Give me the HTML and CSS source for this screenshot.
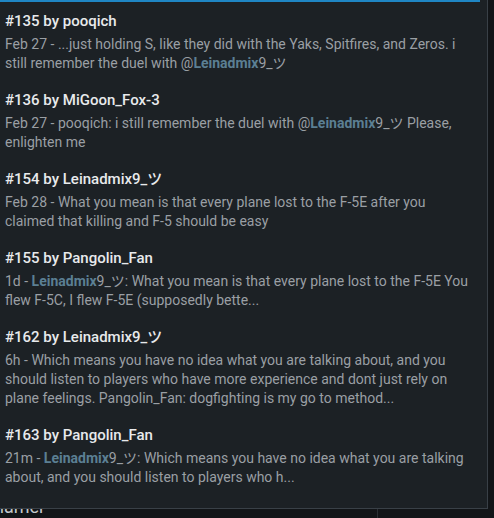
FILE: index.html
```html
<!DOCTYPE html>
<html>
<head>
<meta charset="utf-8">
<link rel="stylesheet" href="styles.css">
</head>
<body>
<div class="page">
  <div class="behind">
    <div class="behind-text">ñamer</div>
    <div class="behind-rule"></div>
  </div>
  <div class="panel">
    <div class="item">
      <div class="title">#135 by pooqich</div>
      <div class="body">Feb 27 - ...just holding S, like they did with the Yaks, Spitfires, and Zeros. i still remember the duel with @<b class="mention">Leinadmix</b>9_ツ</div>
    </div>
    <div class="item">
      <div class="title">#136 by MiGoon_Fox-3</div>
      <div class="body">Feb 27 - pooqich: i still remember the duel with @<b class="mention">Leinadmix</b>9_ツ Please, enlighten me</div>
    </div>
    <div class="item">
      <div class="title">#154 by Leinadmix9_ツ</div>
      <div class="body">Feb 28 - What you mean is that every plane lost to the F-5E after you claimed that killing and F-5 should be easy</div>
    </div>
    <div class="item">
      <div class="title">#155 by Pangolin_Fan</div>
      <div class="body">1d - <b class="mention">Leinadmix</b>9_ツ: What you mean is that every plane lost to the F-5E You flew F-5C, I flew F-5E (supposedly bette...</div>
    </div>
    <div class="item">
      <div class="title">#162 by Leinadmix9_ツ</div>
      <div class="body">6h - Which means you have no idea what you are talking about, and you should listen to players who have more experience and dont just rely on plane feelings. Pangolin_Fan: dogfighting is my go to method...</div>
    </div>
    <div class="item">
      <div class="title">#163 by Pangolin_Fan</div>
      <div class="body">21m - <b class="mention">Leinadmix</b>9_ツ: Which means you have no idea what you are talking about, and you should listen to players who h...</div>
    </div>
  </div>
</div>
</body>
</html>
```
FILE: styles.css
```css
html, body {
  margin: 0;
  padding: 0;
  background: #121518;
}
.page {
  position: relative;
  width: 494px;
  height: 518px;
  overflow: hidden;
  font-family: Roboto, "Noto Sans", "Noto Sans CJK JP", sans-serif;
}
.behind {
  position: absolute;
  left: 0;
  top: 0;
  width: 494px;
  height: 518px;
}
.behind-text {
  position: absolute;
  left: -6px;
  top: 496px;
  font-size: 18px;
  color: #c4c8cc;
}
.behind-rule {
  position: absolute;
  left: 377px;
  top: 508px;
  width: 1px;
  height: 10px;
  background: #2a2f34;
}
.panel {
  position: absolute;
  left: 0;
  top: 0;
  width: 488px;
  height: 509px;
  box-sizing: border-box;
  background: #1c2125;
  border-right: 1px solid #394047;
  border-bottom: 1px solid #394047;
  padding-top: 2px;
}
.panel::before {
  content: "";
  position: absolute;
  left: 0;
  top: 0;
  width: 480px;
  height: 2px;
  background: #1f86c4;
}
.item {
  padding: 8px 12px 8px 5px;
}
.title {
  font-size: 15px;
  font-weight: 500;
  color: #e8eaec;
  line-height: 22px;
}
.body {
  margin-top: 3px;
  font-size: 14px;
  line-height: 19px;
  color: #9a9fa4;
}
.mention {
  font-weight: 700;
  color: #5b7f93;
}
```
